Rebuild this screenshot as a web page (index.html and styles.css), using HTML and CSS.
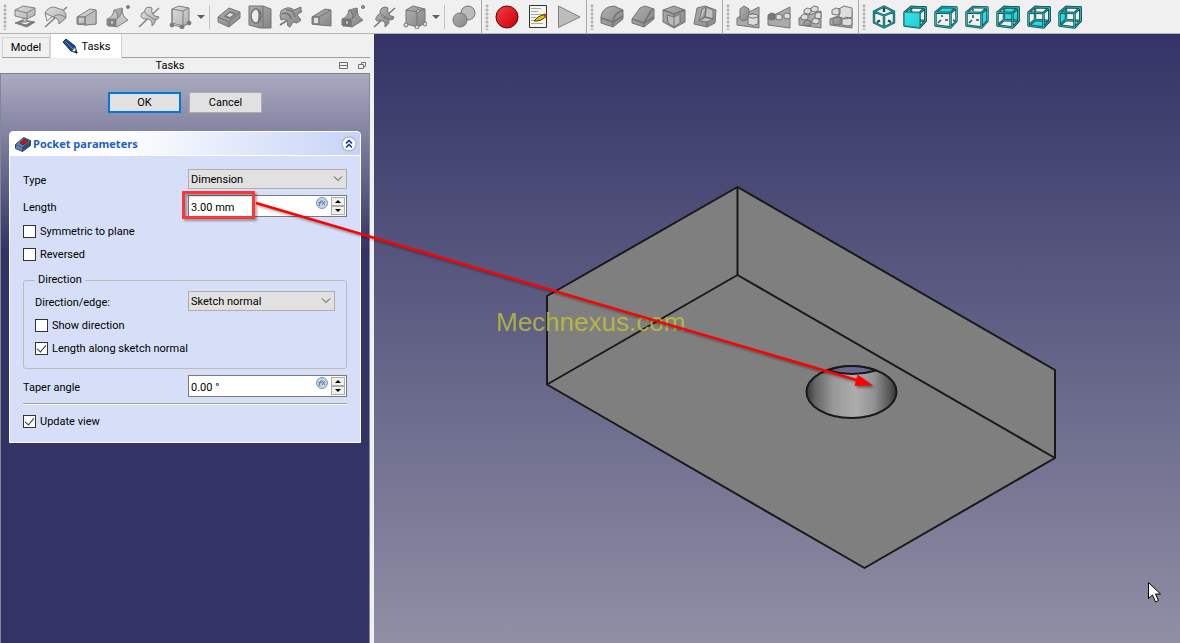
FILE: index.html
```
<!DOCTYPE html>
<html lang="en">
<head>
<meta charset="utf-8">
<title>Pocket parameters</title>
<link rel="stylesheet" href="styles.css">
</head>
<body>
<svg class="defs" width="0" height="0" aria-hidden="true">
  <defs>
    <linearGradient id="gl" x1="0" y1="0" x2="1" y2="1"><stop offset="0" stop-color="#dedede"/><stop offset="1" stop-color="#b0b0b0"/></linearGradient>
    <linearGradient id="gd" x1="0" y1="0" x2="1" y2="1"><stop offset="0" stop-color="#b0b0b0"/><stop offset="1" stop-color="#868686"/></linearGradient>
    <linearGradient id="red" x1="0" y1="0" x2="1" y2="1"><stop offset="0" stop-color="#ff3b3b"/><stop offset="1" stop-color="#c40010"/></linearGradient>
    <linearGradient id="cy" x1="0" y1="0" x2="1" y2="1"><stop offset="0" stop-color="#35e4e6"/><stop offset="1" stop-color="#22cdd1"/></linearGradient>
    <path id="cageBack" d="M8 2 22.500 2.500V16L8 15ZM8 15 1.500 20.500M22.500 16 16.500 22.500"/>
    <path id="cageFront" d="M1.500 7.500 16.500 8V22.500L1.500 20.500ZM1.500 7.500 8 2 22.500 2.500 16.500 8M22.500 2.500V16L16.500 22.500"/>
  </defs>
</svg>

<div class="app">
<header class="toolbars">
  <div class="toolbar" role="toolbar" aria-label="Modeling">
    <span class="grip"></span>
    <button class="tool" aria-label="Pad"><svg viewBox="0 0 24 24" class="lt"><path d="m2 18 8-3 12 2-8 5z" fill="#777"/><path d="m6 18 6-2 6 1-5 3z" fill="#eee"/><path d="M10 12h4v5h-4z"/><path d="M2 5 10 1l12 2v7l-8 4-12-3z"/><path d="m2 5 12 3 8-5M14 8v6" fill="none"/></svg></button>
    <button class="tool" aria-label="Revolution"><svg viewBox="0 0 24 24" class="lt"><path d="M1 22 23 2" class="bold"/><path d="M1 8q3-6 9-6l9 3q4 3 3 8l-7 6q0-6-6-7z"/><path d="M1 8l2 8 5-4M9 12q6-5 13 1" fill="none"/></svg></button>
    <button class="tool" aria-label="Additive loft"><svg viewBox="0 0 24 24" class="lt"><path d="M2 12 15 4l6 1v14l-11 1-8-1z"/><path d="m10 12 11-7v14l-11 1z" fill="#bdbdbd"/><path d="M3 12h7v7H3z" class="bold"/></svg></button>
    <button class="tool" aria-label="Additive pipe"><svg viewBox="0 0 24 24" class="lt"><path d="M8 5 16 3q0 9 6 12l-11 7-10-2v-6q6-2 7-9z" fill="#c4c4c4"/><path d="M8 5q5 3 3 9 5-4 5-11" fill="#a8a8a8"/><path d="M2 14h8v7H2z" fill="#858585"/><path d="M4.500 16h3v3h-3z" fill="#ddd"/><circle cx="22" cy="2" r="1.500" fill="#777"/></svg></button>
    <button class="tool" aria-label="Additive helix"><svg viewBox="0 0 24 24" class="lt"><path d="M2 22 22 3" class="bold"/><path d="M5 8q-3 5 3 6 8-1 7 7 6-5 1-10Q9 11 9 6z"/><path d="M9 3q-3 3 0 6l9 6q4-1 4-3-9-1-7-9-3-2-6 0z"/></svg></button>
    <button class="tool" aria-label="Additive primitive"><svg viewBox="0 0 24 24" class="lt"><path d="m4 4 7-3 10 2v15l-6 3-11-3z"/><path d="m4 4 11 2 6-3M15 6v15M4 4v16l10 2 7-4" fill="none"/><g fill="#777"><circle cx="4" cy="20" r="2"/><circle cx="14" cy="22" r="2"/><circle cx="21" cy="18" r="2"/></g></svg></button>
    <button class="drop" aria-label="More additive primitives"></button>
    <span class="divider"></span>
    <button class="tool" aria-label="Pocket"><svg viewBox="0 0 24 24" class="dk"><path d="m1 12 11-9 11 4v6L12 22 1 17z"/><path d="m1 12 11 5 11-10M12 17v5" fill="none"/><path d="m8 11 5-4 5 2-5 4z" fill="#ddd" class="bold"/></svg></button>
    <button class="tool" aria-label="Hole"><svg viewBox="0 0 24 24" class="dk"><path d="M1 1h14l8 3v19H12L1 20z"/><path d="M15 1v22" fill="none"/><ellipse cx="8" cy="11" rx="5" ry="7" fill="#ececec" class="bold"/><path d="M10 5q4 7 0 12" class="bold"/></svg></button>
    <button class="tool" aria-label="Groove"><svg viewBox="0 0 24 24" class="dk"><path d="M1 20 23 6" class="bold"/><path d="M2 6q7-6 13-1l7-3v4l-4 4 4 5-4 3-4-1-3 5q-4-1-2-6-4-3-7-1-2-4 0-9z"/><path d="M3 9q7-3 9 5M7 5q8-1 9 7" class="bold"/></svg></button>
    <button class="tool" aria-label="Subtractive loft"><svg viewBox="0 0 24 24" class="dk"><path d="M2 12 15 4l6 1v16l-11-1-8-1z"/><path d="M3 12h6v7H3z" fill="#ddd" class="bold"/><path d="M9 12 21 5"/></svg></button>
    <button class="tool" aria-label="Subtractive pipe"><svg viewBox="0 0 24 24" class="dk"><path d="M8 5 16 3q0 9 6 12l-11 7-10-2v-6q6-2 7-9z"/><path d="M8 5q5 3 3 9 5-4 5-11" fill="#8c8c8c"/><path d="M2 14h8v7H2z" fill="#777"/><path d="M4.500 16h3v3h-3z" fill="#ddd"/><circle cx="22" cy="2" r="1.500"/></svg></button>
    <button class="tool" aria-label="Subtractive helix"><svg viewBox="0 0 24 24" class="dk"><path d="M2 22 23 3" class="bold"/><path d="M6 10q-5 6 1 6 7-2 6 6 7-5 2-9Q9 14 10 7z"/><path d="M10 3q-4 4 0 7l8 5q4 0 4-3-8-2-6-9-3-2-6 0z"/></svg></button>
    <button class="tool" aria-label="Subtractive primitive"><svg viewBox="0 0 24 24" class="dk"><path d="m3 5 7-4 12 3v14l-7 4-12-3z"/><path d="m3 5 11 2 8-3M14 7v15" fill="none"/><g fill="#ddd"><circle cx="3" cy="20" r="2"/><circle cx="14" cy="22" r="2"/><circle cx="22" cy="19" r="2"/><circle cx="15" cy="6" r="1.500"/></g></svg></button>
    <button class="drop" aria-label="More subtractive primitives"></button>
    <span class="divider"></span>
    <button class="tool" aria-label="Boolean operation"><svg viewBox="0 0 24 24" class="dk"><circle cx="16" cy="8" r="7" fill="#bbb"/><circle cx="8" cy="15" r="7"/></svg></button>
  </div>
  <div class="toolbar" role="toolbar" aria-label="Macro">
    <span class="grip"></span>
    <button class="tool" aria-label="Record macro"><svg viewBox="0 0 24 24"><circle cx="12" cy="12" r="11" fill="url(#red)" stroke="#55090c"/></svg></button>
    <button class="tool" aria-label="Edit macros"><svg viewBox="0 0 24 24"><path d="M3.500.500h17v22h-17z" fill="#f5f5f0" stroke="#333"/><path d="M5 3.500h10M5 6.500h7M5 9.500h12M5 12.500h5M5 15.500h4M5 18.500h12" stroke="#aaa"/><path d="m8 16 4-4 7-3 2 2-6 4-4 1z" fill="#e6c400" stroke="#443a00"/><path d="m17 10 3-1 1 2-2 1z" fill="#e22"/></svg></button>
    <button class="tool" aria-label="Execute macro"><svg viewBox="0 0 24 24" class="lt"><path d="M1.500 1 23 12 1.500 22.500z" fill="#bdbdbd"/></svg></button>
  </div>
  <div class="toolbar" role="toolbar" aria-label="Dress-up">
    <span class="grip"></span>
    <button class="tool" aria-label="Fillet"><svg viewBox="0 0 24 24" class="dk"><path d="M1 12q1-8 8-10l5-1 9 4v9l-10 8-12-4z"/><path d="M1 13l12 4v5M13 17q0-8 10-12M13 17l10-6" class="bold"/></svg></button>
    <button class="tool" aria-label="Chamfer"><svg viewBox="0 0 24 24" class="dk"><path d="M1 14 9 3l5-2 9 3v10l-10 8-12-4z"/><path d="m1 14 12 4v4M13 18l7-12 3-2M13 18l10-6" class="bold"/></svg></button>
    <button class="tool" aria-label="Draft"><svg viewBox="0 0 24 24" class="dk"><path d="m1 5 11-4 11 4v12l-11 6-11-6z"/><path d="m1 5 11 4 11-4M12 9v14" class="bold"/><path d="m5 10 7 2 6-3v9l-6 4-6-4z" fill="#bbb"/><path d="M12 12v10"/></svg></button>
    <button class="tool" aria-label="Thickness"><svg viewBox="0 0 24 24" class="dk"><path d="m4 3 8-2 11 4-1 13-8 4-13-3z"/><path d="m9 4 4-2 7 3v9l-6 3-8-1z" fill="#c0c0c0"/><path d="m13 3-1 9-5 3M12 12l8 2M14 17v5" class="bold"/></svg></button>
  </div>
  <div class="toolbar" role="toolbar" aria-label="Transformations">
    <span class="grip"></span>
    <button class="tool" aria-label="Mirrored"><svg viewBox="0 0 24 24" class="dk"><path d="m1 13 8-4 14-7v21l-22-3z" fill="#aaa"/><path d="m4 4 4-3 5 3v10l-6 2-3-2z"/><path d="M12 11q5-4 10 0v8q-5 3-10 0z" fill="#ddd"/><ellipse cx="17" cy="11" rx="5" ry="2" fill="#ddd"/></svg></button>
    <button class="tool" aria-label="Linear pattern"><svg viewBox="0 0 24 24" class="dk"><path d="m1 13 22-11v21l-22-3z" fill="#aaa"/><path d="m1 10 3-2 4 1v5l-3 1-4-1z" fill="#777"/><g fill="#ddd"><path d="m9 10 2-1 4 1v4l-2 1-4-1zM17 9l2-1 4 1v4l-2 1-4-1z"/></g></svg></button>
    <button class="tool" aria-label="Polar pattern"><svg viewBox="0 0 24 24" class="dk"><path d="m1 13 22-7v17l-22-3z" fill="#aaa"/><g fill="#ddd"><path d="m6 5 3-2 4 1v4l-3 1-4-1zM13 3l3-2 4 1v4l-3 1-4-1zM17 9l3-2 3 1v5l-3 1-3-1zM14 15l3-2 4 1v4l-3 1-4-1zM3 11l3-2 4 1v4l-3 1-4-1z"/></g><path d="m6 17 3-2 4 1v4l-3 1-4-1z"/></svg></button>
    <button class="tool" aria-label="MultiTransform"><svg viewBox="0 0 24 24" class="dk"><path d="m1 14 22-8v17l-22-3z" fill="#aaa"/><g fill="#ddd"><path d="m10 4 5-3 8 2v9l-6 2-7-2zM3 5l4-2 4 1v5l-4 1-4-1zM13 15l4-3 6 2v6l-4 1-6-1z"/></g><path d="m4 14 4-2 4 1v6l-4 1-4-1z"/></svg></button>
  </div>
  <div class="toolbar last" role="toolbar" aria-label="View">
    <span class="grip"></span>
    <button class="tool" aria-label="Isometric"><svg viewBox="0 0 24 24" class="iso"><path d="m12 1.500 10 5v11l-10 5-10-5v-11zM2 6.500l10 4 10-4M12 3v4M12 10.500v12M5 17l3-1.500M19 17l-3-1.500" class="o"/><path d="m12 1.500 10 5v11l-10 5-10-5v-11zM2 6.500l10 4 10-4M12 10.500v12" class="i"/></svg></button>
    <button class="tool" aria-label="Front"><svg viewBox="0 0 24 24" class="iso"><use href="#cageBack" class="o"/><use href="#cageBack" class="i"/><use href="#cageFront" class="o"/><use href="#cageFront" class="i"/><path d="M1.500 7.500 16.500 8V22.500L1.500 20.500z" class="f"/></svg></button>
    <button class="tool" aria-label="Top"><svg viewBox="0 0 24 24" class="iso"><path d="M8 10v2M7 15l-3 3M11 15h3M19 15l2 1" class="hid"/><path d="M1.500 7.500 8 2l14.500.500L16.500 8z" class="f"/><use href="#cageFront" class="o"/><use href="#cageFront" class="i"/></svg></button>
    <button class="tool" aria-label="Right"><svg viewBox="0 0 24 24" class="iso"><path d="M8 4v2M8 10v3M7 15l-3 3M11 15h3" class="hid"/><path d="M16.500 8 22.500 2.500V16L16.500 22.500z" class="f"/><use href="#cageFront" class="o"/><use href="#cageFront" class="i"/></svg></button>
    <button class="tool" aria-label="Rear"><svg viewBox="0 0 24 24" class="iso"><path d="M8 2 22.500 2.500V16L8 15z" class="f"/><use href="#cageBack" class="o"/><use href="#cageBack" class="i"/><use href="#cageFront" class="o"/><use href="#cageFront" class="i"/></svg></button>
    <button class="tool" aria-label="Bottom"><svg viewBox="0 0 24 24" class="iso"><path d="M1.500 20.500 8 15l14.500 1-6 6.500z" class="f"/><use href="#cageBack" class="o"/><use href="#cageBack" class="i"/><use href="#cageFront" class="o"/><use href="#cageFront" class="i"/></svg></button>
    <button class="tool" aria-label="Left"><svg viewBox="0 0 24 24" class="iso"><path d="M1.500 7.500 8 2v13l-6.500 5.500z" class="f"/><use href="#cageBack" class="o"/><use href="#cageBack" class="i"/><use href="#cageFront" class="o"/><use href="#cageFront" class="i"/></svg></button>
  </div>
</header>

<div class="workspace">
  <aside class="side">
    <div class="tabs" role="tablist">
      <button class="tab" role="tab" aria-selected="false">Model</button>
      <button class="tab active" role="tab" aria-selected="true"><svg viewBox="0 0 16 16" class="pencil"><path d="M1 4 4 1l9 7 2 7-6-2z" fill="#204a87" stroke="#16304f"/><path d="m3 3 8 8" stroke="#5b87bd"/><path d="m10 13 3-4 2 6z" fill="#e8e4d4" stroke="#555" stroke-width=".6"/><path d="m13 13 2 2" stroke="#111" stroke-width="1.500"/></svg>Tasks</button>
    </div>
    <div class="dock-title">
      <h1>Tasks</h1>
      <button class="dock-btn" aria-label="Collapse"><svg viewBox="0 0 9 9"><path d="M.5 1.500h8v6h-8zM.5 4.500h8"/></svg></button>
      <button class="dock-btn" aria-label="Float"><svg viewBox="0 0 9 9"><path d="M3.500 3.500v-2h4v4h-2M.5 3.500h5v4h-5z"/></svg></button>
    </div>
    <div class="task-area">
      <div class="actions">
        <button class="btn primary">OK</button>
        <button class="btn">Cancel</button>
      </div>
      <section class="card">
        <header class="card-head">
          <svg viewBox="0 0 16 16" class="pocket"><path d="m.5 8.500 8-7 7 3v5l-8 6-7-3z" fill="#5c86b4" stroke="#2c435f"/><path d="m7.500 11.500 8-7v5l-8 6z" fill="#284f80"/><path d="m.5 8.500 7 3 8-7M7.500 11.500v4" fill="none" stroke="#2c435f" stroke-width=".7"/><path d="m5 7 4-4 4 2-5 4z" fill="#d80f18" stroke="#4d1015" stroke-width=".7"/></svg>
          <h2>Pocket parameters</h2>
          <button class="fold" aria-label="Collapse section"><svg viewBox="0 0 16 16"><circle cx="8" cy="8" r="7" fill="#fff" stroke="#b4bad4" stroke-width="1.500"/><path d="m5 7.500 3-3 3 3M5 11.500l3-3 3 3" fill="none" stroke="#1b3f94" stroke-width="1.700"/></svg></button>
        </header>
        <form class="form">
          <div class="row">
            <label for="type">Type</label>
            <span class="pick"><select id="type"><option>Dimension</option></select><svg viewBox="0 0 10 6"><path d="m1 .500 4 4 4-4"/></svg></span>
          </div>
          <div class="row field-row">
            <label for="length">Length</label>
            <span class="spin"><input type="text" id="length" value="3.00 mm"><button type="button" class="fx" aria-label="Length formula"><svg viewBox="0 0 12 12"><circle cx="6" cy="6" r="5.500"/><path d="M3 9q1-5 3-6M2.500 5.500h3M6 8l3-4M6 4l3 4"/></svg></button><span class="steps"><button type="button" class="step up" aria-label="Increase length"></button><button type="button" class="step down" aria-label="Decrease length"></button></span></span>
          </div>
          <label class="check"><input type="checkbox">Symmetric to plane</label>
          <label class="check"><input type="checkbox">Reversed</label>
          <fieldset class="group">
            <legend>Direction</legend>
            <div class="row">
              <label for="edge">Direction/edge:</label>
              <span class="pick"><select id="edge"><option>Sketch normal</option></select><svg viewBox="0 0 10 6"><path d="m1 .500 4 4 4-4"/></svg></span>
            </div>
            <label class="check"><input type="checkbox">Show direction</label>
            <label class="check"><input type="checkbox" checked>Length along sketch normal</label>
          </fieldset>
          <div class="row field-row">
            <label for="taper">Taper angle</label>
            <span class="spin"><input type="text" id="taper" value="0.00 °"><button type="button" class="fx" aria-label="Taper formula"><svg viewBox="0 0 12 12"><circle cx="6" cy="6" r="5.500"/><path d="M3 9q1-5 3-6M2.500 5.500h3M6 8l3-4M6 4l3 4"/></svg></button><span class="steps"><button type="button" class="step up" aria-label="Increase taper"></button><button type="button" class="step down" aria-label="Decrease taper"></button></span></span>
          </div>
          <hr class="rule">
          <label class="check"><input type="checkbox" checked>Update view</label>
        </form>
      </section>
    </div>
  </aside>

  <main class="view">
    <svg class="scene" viewBox="374 34 806 609" preserveAspectRatio="xMidYMid slice" role="img" aria-label="Block with a round pocket">
      <defs><linearGradient id="bore"><stop offset="0" stop-color="#383838"/><stop offset=".1" stop-color="#666"/><stop offset=".3" stop-color="#989898"/><stop offset=".55" stop-color="#adadad"/><stop offset=".75" stop-color="#929292"/><stop offset=".92" stop-color="#585858"/><stop offset="1" stop-color="#333"/></linearGradient></defs>
      <g stroke="#191919" stroke-width="2" stroke-linejoin="round">
        <path d="M737.500 187 1055 370v88L864.500 568 547 384.500V296z" fill="#7f7f7f"/>
        <path d="M737.500 187v88M547 384.500 737.500 275 1055 458" fill="none"/>
        <ellipse cx="851.500" cy="392" rx="45" ry="26" fill="url(#bore)"/>
        <path d="M828 370.500q23-9 48 0-24 7-48 0z" fill="#67678f"/>
      </g>
      <text x="496" y="331" class="mark">Mechnexus.com</text>
      <path d="M1148.500 582.500v16l4-3.500 3 7 3-1.500-3-6.500h5z" fill="#fff" stroke="#000"/>
    </svg>
  </main>
</div>
<svg class="callout" width="900" height="420" viewBox="0 0 900 420" aria-hidden="true">
  <rect x="183.500" y="192.500" width="70" height="25" fill="none" stroke="#ff3434" stroke-width="3"/>
  <path d="M256 203 860 381" stroke="#f00" stroke-width="2.500" fill="none"/>
  <path d="m857.500 374.500 15.500 11-18.500.500z" fill="#f00"/>
</svg>
</div>
</body>
</html>
```

FILE: styles.css
```
* { box-sizing: border-box; }
body {
  margin: 0;
  font: 11px/16px Roboto, "Noto Sans", sans-serif;
  color: #000;
  background: #f0f0f0;
}
button, input, select { font: inherit; color: inherit; margin: 0; padding: 0; border: 0; background: none; border-radius: 0; }
h1, h2 { margin: 0; font-size: inherit; font-weight: normal; }
.defs { position: absolute; }
.app { position: relative; display: flex; flex-direction: column; min-height: 100vh; overflow: hidden; }

.toolbars { display: flex; height: 34px; background: #f0f0f0; border-bottom: 1px solid #b4b4b4; }
.toolbar { display: flex; align-items: center; padding-right: 2px; border-right: 1px solid #a8a8a8; }
.toolbar.last { border-right: 0; }
.grip {
  width: 9px; height: 26px;
  background: radial-gradient(circle at 5px 2px, #b4b4b4 0 1px, transparent 2px) 0 0 / 9px 4px;
}
.tool { display: grid; place-items: center; width: 31px; height: 32px; }
.tool svg { width: 24px; height: 24px; }
.drop { display: grid; place-items: center; width: 11px; height: 32px; }
.drop::after { content: ""; border: 4px solid transparent; border-top-color: #606060; border-bottom: 0; }
.divider { width: 7px; height: 24px; background: linear-gradient(#c4c4c4, #c4c4c4) 3px 0 / 1px 100% no-repeat; }
.lt { stroke: #808080; fill: url(#gl); stroke-linejoin: round; }
.dk { stroke: #747474; fill: url(#gd); stroke-linejoin: round; }
.lt .bold, .dk .bold { stroke-width: 1.5; }
.lt path:not([fill]) + path:not([fill]).bold, .dk path:not([fill]) + path:not([fill]).bold { fill: none; }
.iso { fill: none; stroke-linejoin: round; }
.iso .o { stroke: #0f4f52; stroke-width: 2.4; }
.iso .i { stroke: #2bb0b3; stroke-width: 1; }
.iso .hid { stroke: #0f5f62; stroke-width: 1.5; }
.iso .f { fill: url(#cy); stroke: #127c80; stroke-width: 0.5; }

.workspace { display: flex; flex: 1; }
.side { display: flex; flex-direction: column; width: 370px; flex: none; }
.tabs { display: flex; align-items: flex-end; height: 24px; }
.tabs::after { content: ""; flex: 1; border-bottom: 1px solid #a0a0a0; }
.tab { height: 21px; width: 48px; margin-left: 2px; padding-top: 1px; border: 1px solid #d4d4d4; border-bottom-color: #a0a0a0; }
.tab.active {
  display: flex; align-items: center; justify-content: center; gap: 4px;
  width: 72px; height: 24px; margin-left: 0; padding-top: 2px; background: #fff; border-width: 0 1px;
}
.pencil { width: 16px; height: 16px; margin-bottom: 2px; }
.dock-title { display: flex; align-items: center; height: 16px; border-bottom: 1px solid #7c8290; }
.dock-title h1 { flex: 1; padding: 1px 0 0 6px; text-align: center; }
.dock-btn { display: grid; place-items: center; width: 19px; height: 14px; }
.dock-btn svg { width: 9px; height: 9px; fill: none; stroke: #707070; }
.dock-title .dock-btn + .dock-btn { margin-right: -2px; }

.task-area {
  flex: 1; padding: 18px 8px; border-left: 1px solid #828790; border-right: 1px solid #828790;
  background: linear-gradient(#aaaac0, #333366 176px);
}
.actions { display: flex; justify-content: center; gap: 8px; margin-bottom: 18px; }
.btn { width: 73px; height: 21px; padding-top: 1px; background: #e1e1e1; border: 1px solid #adadad; }
.btn.primary { border: 2px solid #0078d7; }
.card { border: 1px solid #fff; border-radius: 4px 4px 0 0; background: #d6dff7; }
.card-head {
  display: flex; align-items: center; gap: 2px; height: 24px; padding: 0 3px 0 5px;
  border-bottom: 1px solid #fff; border-radius: 4px 4px 0 0;
  background: linear-gradient(90deg, #fff 30%, #c6d3f7);
}
.pocket, .fold svg { display: block; width: 16px; height: 16px; }
.card-head h2 { flex: 1; padding-top: 1px; font-family: "Open Sans", "Noto Sans", sans-serif; font-weight: bold; color: #215dc6; }

.form { padding: 13px 13px 9px; }
.row { display: grid; grid-template-columns: 165px minmax(0, 1fr); align-items: center; }
.row label { padding-top: 3px; }
.pick { position: relative; display: block; }
.pick select { display: block; width: 100%; height: 20px; padding: 2px 0 0 2px; appearance: none; background: #e1e1e1; border: 1px solid #adadad; }
.pick svg { position: absolute; right: 4px; top: 7px; width: 10px; height: 6px; fill: none; stroke: #444; pointer-events: none; }
.spin { display: flex; height: 22px; padding: 1px; background: #fff; border: 1px solid #7a7a7a; }
.spin input { flex: 1; width: 0; min-width: 0; padding: 3px 0 0 1px; outline: 0; }
.fx { width: 12px; height: 12px; margin: 0 3px 0 0; }
.fx svg { display: block; width: 12px; height: 12px; fill: #c2d3e4; stroke: #7d99b6; }
.fx path { fill: none; stroke: #54789f; }
.steps { display: grid; grid-template-rows: 1fr 1fr; width: 14px; }
.step { display: grid; place-items: center; background: #f0f0f0; border: 1px solid #adadad; }
.step::after { content: ""; border: 3px solid transparent; }
.up::after { border-bottom-color: #000; border-top: 0; }
.down::after { border-top-color: #000; border-bottom: 0; }
.field-row { margin: 6px 0 3px; }
.check { display: flex; align-items: center; gap: 4px; height: 23px; }
.check input { position: relative; width: 13px; height: 13px; appearance: none; background: #fff; border: 1px solid #333; }
.check input:checked::after {
  content: ""; position: absolute; left: 3px; top: 0; width: 4px; height: 8px;
  border: solid #333; border-width: 0 1px 1px 0; transform: rotate(40deg);
}
.group { min-width: 0; margin: 6px 0 0; padding: 3px 11px 8px; border: 1px solid #bcbcbc; border-radius: 3px; }
.group legend { padding: 0 3px; margin-left: 0; }
.group .row { grid-template-columns: 153px minmax(0, 1fr); margin-bottom: 3px; }
.rule { height: 2px; margin: 6px 0 5px; border: 0; border-top: 1px solid #a0a0a0; background: #fff; }

.view { flex: 1; min-width: 0; margin-left: 4px; background: linear-gradient(#333366, #8f8fa5); }
.scene { display: block; width: 100%; height: 100%; }
.mark { font: 26px "Liberation Sans", Arial, sans-serif; fill: #c8c832; fill-opacity: .75; }
.callout { position: absolute; left: 0; top: 0; pointer-events: none; filter: drop-shadow(2px 2px 1px rgba(0, 0, 0, .35)); }
```
